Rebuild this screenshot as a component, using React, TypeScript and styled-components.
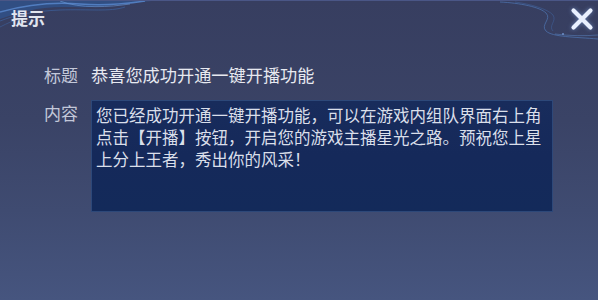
import React from "react";
import styled, { createGlobalStyle } from "styled-components";

const GlobalStyle = createGlobalStyle`
  html, body { margin: 0; padding: 0; background: #383f61; }
  body { font-family: "Noto Sans CJK SC", "Noto Sans", sans-serif; }
`;

const Dialog = styled.div`
  position: relative;
  width: 598px;
  height: 300px;
  overflow: hidden;
  box-sizing: border-box;
  border-top: 1px solid #4a5686;
  background: linear-gradient(180deg, #373e60 0%, #3a4366 40%, #3f4b71 70%, #46557f 100%);
  display: flex;
  flex-direction: column;
`;

const Decoration = styled.svg`
  position: absolute;
  top: 0;
  left: 0;
  pointer-events: none;
`;

const Header = styled.div`
  position: relative;
  height: 40px;
  display: flex;
  justify-content: space-between;
  align-items: flex-start;
  padding: 7px 4px 0 11px;
  box-sizing: border-box;
`;

const Title = styled.div`
  font-size: 17px;
  line-height: 20px;
  font-weight: 700;
  color: #e1e5ef;
`;

const CloseButton = styled.div`
  width: 24px;
  height: 24px;
  margin-top: -1px;
  display: flex;
  align-items: center;
  justify-content: center;
  filter: drop-shadow(0 0 2px rgba(150, 190, 255, 0.5));
`;

const Body = styled.div`
  position: relative;
  display: grid;
  grid-template-columns: 34px 462px;
  column-gap: 13px;
  row-gap: 14px;
  padding: 23px 0 0 44px;
`;

const Label = styled.div<{ $offset?: number }>`
  font-size: 17px;
  line-height: 22px;
  color: #c3c8d9;
  white-space: nowrap;
  margin-top: ${(p) => p.$offset ?? 0}px;
`;

const TitleText = styled.div`
  font-size: 17.2px;
  line-height: 22px;
  color: #e7e9f0;
  white-space: nowrap;
`;

const ContentBox = styled.div`
  box-sizing: border-box;
  height: 112px;
  border: 1px solid #2d4879;
  background: linear-gradient(180deg, #182c5c 0%, #15295a 50%, #132a5a 100%);
  padding: 3px 2px 0 4px;
  font-size: 16.5px;
  line-height: 22px;
  color: #dadfea;
  text-spacing-trim: space-all;
`;

function Swirls() {
  return (
    <Decoration width="598" height="60" viewBox="0 0 598 60">
      <path d="M0 18 C20 11 40 5 70 6 C100 7 120 3 152 0 L0 0 Z" fill="#2f5592" opacity="0.7" />
      <path d="M0 11 C25 4 55 1 80 3 C105 5 125 3 145 0" stroke="#5a8ad0" strokeWidth="1.5" fill="none" opacity="0.8" />
      <path d="M0 20 C15 14 35 10 60 9 C90 8 110 11 125 6" stroke="#3d68a8" strokeWidth="1" fill="none" opacity="0.6" />
      <path d="M60 0 C80 8 110 6 130 3" stroke="#6b9ad8" strokeWidth="1" fill="none" opacity="0.6" />
      <path d="M0 26 C8 22 14 19 20 18" stroke="#3d68a8" strokeWidth="1" fill="none" opacity="0.5" />
      <path d="M500 1 C520 2 540 6 546 12 C552 18 540 24 546 30 C552 36 575 36 598 38" stroke="#4f76b4" strokeWidth="1" fill="none" opacity="0.7" />
      <path d="M515 1 C530 3 548 8 553 14 C557 20 548 25 553 30" stroke="#3f65a3" strokeWidth="1" fill="none" opacity="0.5" />
      <path d="M555 33 C570 35 585 35 598 34" stroke="#5b85c4" strokeWidth="1" fill="none" opacity="0.5" />
      <circle cx="563" cy="33" r="1" fill="#7aa2e0" opacity="0.8" />
    </Decoration>
  );
}

export default function App() {
  return (
    <>
      <GlobalStyle />
      <Dialog>
        <Swirls />
        <Header>
          <Title>提示</Title>
          <CloseButton>
            <svg width="24" height="24" viewBox="0 0 24 24">
              <path d="M3.5 3.5 L20.5 20.5 M20.5 3.5 L3.5 20.5" stroke="#e9f0ff" strokeWidth="4.2" strokeLinecap="round" fill="none" />
            </svg>
          </CloseButton>
        </Header>
        <Body>
          <Label>标题</Label>
          <TitleText>恭喜您成功开通一键开播功能</TitleText>
          <Label $offset={2}>内容</Label>
          <ContentBox>
            您已经成功开通一键开播功能，可以在游戏内组队界面右上角点击【开播】按钮，开启您的游戏主播星光之路。预祝您上星上分上王者，秀出你的风采！
          </ContentBox>
        </Body>
      </Dialog>
    </>
  );
}
